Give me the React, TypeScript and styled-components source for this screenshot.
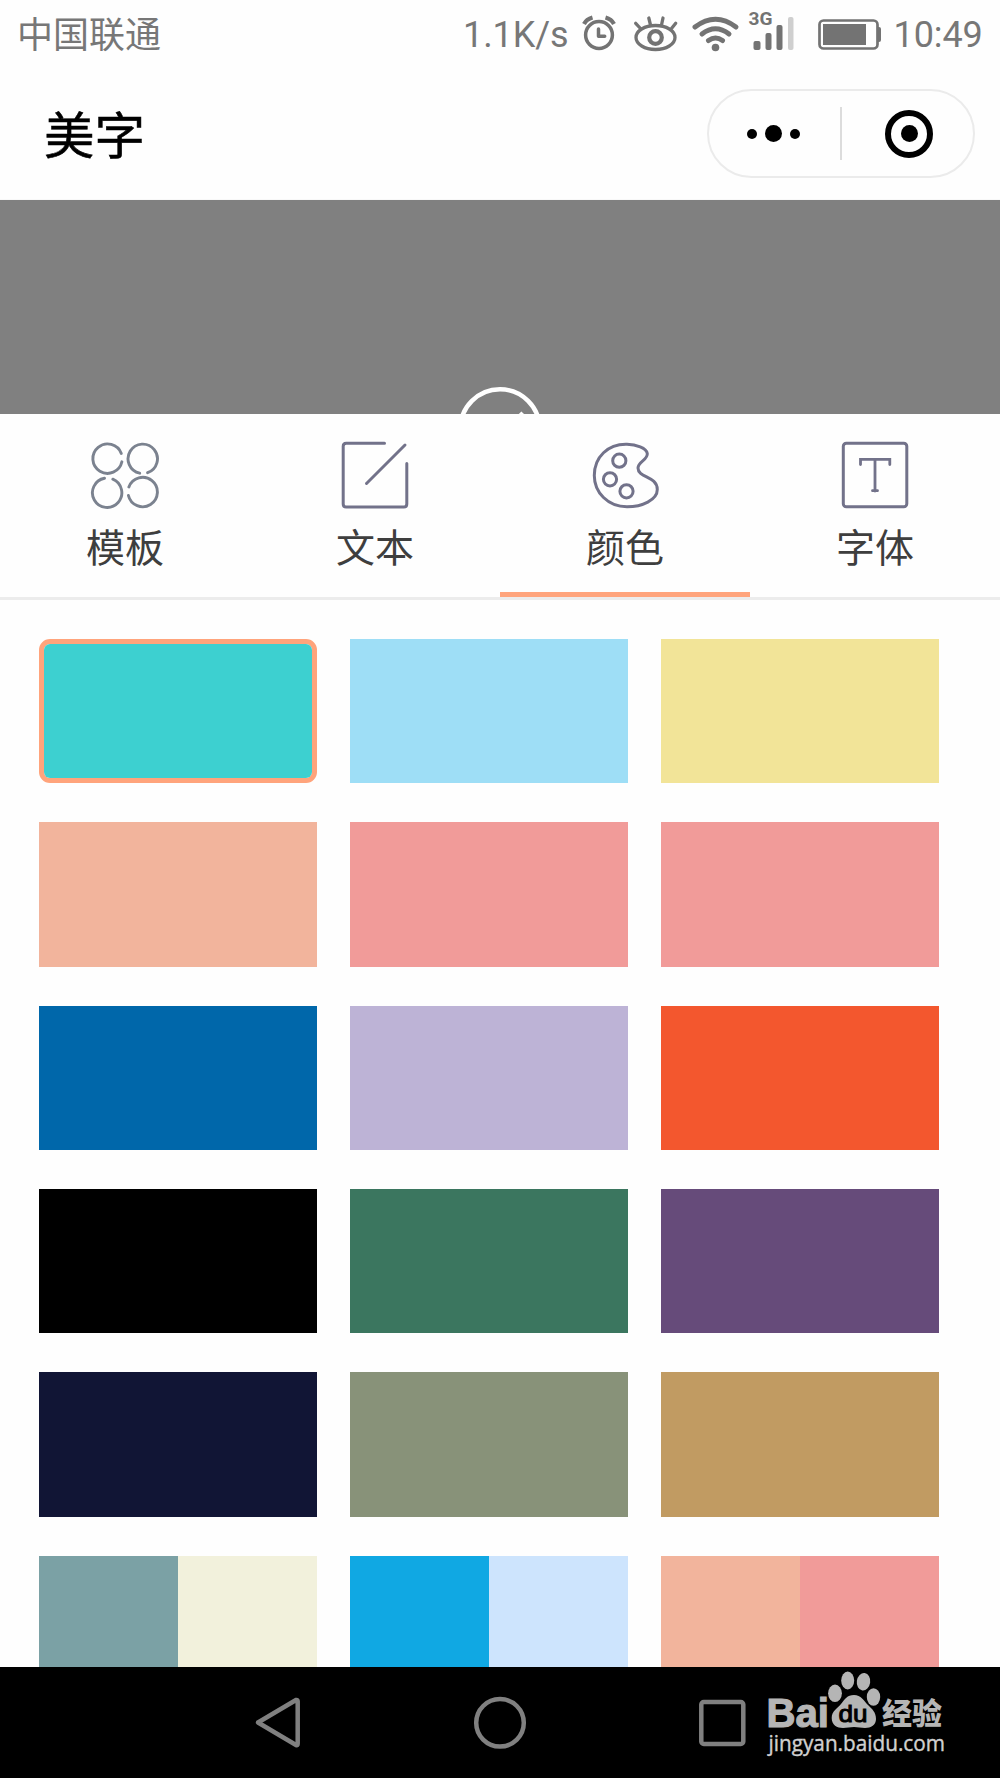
import React from "react";
import styled, { createGlobalStyle } from "styled-components";

const Global = createGlobalStyle`
  html, body { margin: 0; padding: 0; background: #fefefe; }
  * { box-sizing: border-box; }
`;

const sans = `Roboto, "Noto Sans CJK SC", sans-serif`;
const line = "#72728a";
const accent = "#ffa47c";

const Screen = styled.div`
  width: 1000px;
  height: 1778px;
  display: flex;
  flex-direction: column;
  overflow: hidden;
  background: #fefefe;
  font-family: ${sans};
`;

const StatusBar = styled.div`
  height: 70px;
  display: flex;
  align-items: flex-start;
  justify-content: space-between;
  padding: 0 17px 0 17px;
  color: #777;
  font-size: 36px;
  line-height: 70px;
`;

const Carrier = styled.span`
  font-family: "Noto Sans CJK SC", sans-serif;
  font-size: 36px;
  line-height: 64px;
`;

const StatusGroup = styled.div`
  display: flex;
`;

const StatusText = styled.span<{ $w: number; $indent?: number }>`
  width: ${(p) => p.$w}px;
  text-indent: ${(p) => p.$indent ?? 0}px;
  letter-spacing: -0.1px;
  white-space: nowrap;
`;

const Glyph = styled.svg`
  display: block;
  flex: none;
`;

const Header = styled.header`
  height: 130px;
  display: flex;
  align-items: flex-start;
  justify-content: space-between;
  padding: 19px 25px 0 44px;
  border-bottom: 1px solid #f8f8f8;
`;

const Title = styled.h1`
  margin: 8px 0 0;
  font: 400 50.5px/70px "Noto Sans CJK SC", sans-serif;
  -webkit-text-stroke: 0.5px #000;
  color: #000;
`;

const Capsule = styled.div`
  width: 268px;
  height: 89px;
  border: 2px solid #ebebeb;
  border-radius: 45px;
  display: flex;
  align-items: center;
`;

const CapsuleHalf = styled.div<{ $shift: number }>`
  flex: 1 1 0;
  min-width: 0;
  display: flex;
  align-items: center;
  justify-content: center;
  gap: 8px;
  padding-left: ${(p) => Math.max(p.$shift, 0)}px;
  padding-right: ${(p) => Math.max(-p.$shift, 0)}px;
`;

const CapsuleDivider = styled.div`
  width: 2px;
  height: 53px;
  background: #dcdcdc;
`;

const Dot = styled.span<{ $size: number }>`
  width: ${(p) => p.$size}px;
  height: ${(p) => p.$size}px;
  border-radius: 50%;
  background: #000;
`;

const Ring = styled.span`
  width: 48px;
  height: 48px;
  border: 6px solid #000;
  border-radius: 50%;
  display: flex;
  align-items: center;
  justify-content: center;
`;

const Preview = styled.section`
  height: 214px;
  background: #808080;
  display: flex;
  justify-content: center;
  align-items: flex-end;
`;

const Tabs = styled.nav`
  height: 186px;
  display: grid;
  grid-template-columns: repeat(4, 1fr);
  border-bottom: 3px solid #ececec;
`;

const Tab = styled.div<{ $active?: boolean }>`
  display: flex;
  flex-direction: column;
  align-items: center;
  padding-top: 24px;
  border-bottom: 5px solid ${(p) => (p.$active ? accent : "transparent")};
`;

const TabLabel = styled.span`
  margin-top: 5px;
  font: 400 39px/56px "Noto Sans CJK SC", sans-serif;
  color: #3e3e3e;
`;

const Palette = styled.main`
  height: 1067px;
  overflow: hidden;
  padding: 39px 0 0 39px;
  display: grid;
  grid-template-columns: repeat(3, 277.8px);
  grid-auto-rows: 144.4px;
  gap: 38.95px 33.2px;
`;

const Swatch = styled.div<{ $selected?: boolean }>`
  display: flex;
  overflow: hidden;
  border: ${(p) => (p.$selected ? `5px solid ${accent}` : "0")};
  border-radius: ${(p) => (p.$selected ? 11 : 0)}px;
  background: ${(p) => (p.$selected ? accent : "none")};
`;

const Tone = styled.span<{ $color: string }>`
  flex: 1;
  background: ${(p) => p.$color};
`;

const NavBar = styled.footer`
  position: relative;
  height: 111px;
  background: #000;
  display: flex;
  align-items: center;
  justify-content: center;
  gap: 162px;
`;

const Watermark = styled.svg`
  position: absolute;
  left: 760px;
  top: 0;
`;

const SWATCHES: string[][] = [
  ["#3dd0d0"], ["#9edef6"], ["#f2e498"],
  ["#f2b49c"], ["#f19b99"], ["#f19b99"],
  ["#0067aa"], ["#bdb3d6"], ["#f3572e"],
  ["#000000"], ["#3b765f"], ["#664b7a"],
  ["#111535"], ["#889279"], ["#c19b62"],
  ["#7ba1a5", "#f2f1dc"], ["#10a8e3", "#cde4fd"], ["#f2b49c", "#f19b99"],
];

const StatusIcons = () => (
  <Glyph width="313" height="70" viewBox="578 0 313 70" fill="none" stroke="#737373" strokeLinecap="round" strokeLinejoin="round">
    <g strokeWidth="3.5">
      <circle cx="599" cy="35" r="13.4" />
      <path d="M598.5 29v7.3h6.2" />
      <path d="M584 24q2.5-4.8 8.5-6.5M605.5 17.5q6 1.7 8.5 6.5" strokeLinecap="butt" strokeWidth="4.2" />
    </g>
    <g strokeWidth="3.3">
      <ellipse cx="655.5" cy="37.5" rx="19.5" ry="12" />
      <circle cx="655.5" cy="37.5" r="6.3" strokeWidth="4.2" />
      <path d="M640.5 28.5l-4.8-5.2M650.5 25l-1.7-7M661.5 25l1.5-7M671.5 28.5l4.2-5.2" />
    </g>
    <g strokeWidth="5">
      <path d="M695 27q20.5-15.5 41 0" />
      <path d="M702 34q13.5-10.5 27 0" />
      <path d="M708.5 40.5q7-5 14 0" />
    </g>
    <circle cx="715.5" cy="47.5" r="3.8" fill="#737373" stroke="none" />
    <text x="748.5" y="25" fontFamily="Roboto, sans-serif" fontWeight="700" fontSize="19" textLength="24" lengthAdjust="spacingAndGlyphs" fill="#737373" stroke="none">3G</text>
    <g fill="#737373" stroke="none">
      <rect x="753.5" y="41" width="7" height="9" rx="2" />
      <rect x="765.5" y="33" width="6" height="17" rx="2" />
      <rect x="776.5" y="25" width="6" height="25" rx="2" />
      <rect x="788" y="17" width="5.5" height="33" rx="2" fill="#cfcfcf" />
      <rect x="823" y="24" width="43" height="21" />
      <path d="M877.5 27h1.5q2 0 2 2v11q0 2-2 2h-1.5z" />
    </g>
    <rect x="819.5" y="20.5" width="58" height="28" rx="4" strokeWidth="2.7" />
  </Glyph>
);

const TemplateIcon = () => (
  <Glyph width="70" height="74" viewBox="90 438 70 74" fill="none" stroke="#7b828f" strokeWidth="2.9" strokeLinecap="round">
    <path d="M121.3 453.5A14.7 14.7 0 1 0 121.9 461.8" />
    <path d="M139.7 473.2A14.7 14.7 0 1 1 147.6 472.7" />
    <path d="M104.5 478.3A14.7 14.7 0 1 0 112.8 479.2" />
    <path d="M128.9 487A14.7 14.7 0 1 1 128.4 495.5" />
  </Glyph>
);

const TextIcon = () => (
  <Glyph width="70" height="74" viewBox="340 438 70 74" fill="none" stroke={line} strokeWidth="3" strokeLinecap="round">
    <path d="M384.5 443.3h-38.3q-3 0-3 3v57.6q0 3 3 3h57.6q3 0 3-3V463.5" />
    <path d="M366.5 483.5L405 445" />
  </Glyph>
);

const ColorIcon = () => (
  <Glyph width="70" height="74" viewBox="590 438 70 74" fill="none" stroke={line} strokeWidth="3">
    <path d="M627 444.3C608 443.8 594.3 457 594.3 475.5C594.3 492.5 608 506.8 627 506.8C642 506.8 657.3 500 657.3 489.5C657.3 476 638 478 638 468C638 461.500 648 460 647.3 453.5C646.5 448 636 444.5 627 444.3Z" />
    <circle cx="619.3" cy="460.7" r="6.6" />
    <circle cx="610" cy="479.3" r="6.6" />
    <circle cx="626.5" cy="491.3" r="6.6" />
  </Glyph>
);

const FontIcon = () => (
  <Glyph width="70" height="74" viewBox="840 438 70 74" fill="none" stroke={line} strokeWidth="3" strokeLinecap="round">
    <rect x="843.3" y="443.3" width="63.5" height="63.5" rx="3" />
    <path d="M860.5 464.5v-5.200h29.300v5.200M875 460v31M872.5 490.7h5" strokeWidth="2.8" />
  </Glyph>
);

const BaiduMark = () => (
  <Watermark width="200" height="111" viewBox="760 1667 200 111" fill="#b5b5b5">
    <text x="766.5" y="1726.5" fontFamily="'Liberation Sans', Arial, sans-serif" fontWeight="700" fontSize="41" textLength="62.5" lengthAdjust="spacingAndGlyphs" stroke="#b5b5b5" strokeWidth="1.2">Bai</text>
    <ellipse cx="835" cy="1693.3" rx="6.9" ry="8.7" />
    <ellipse cx="847.7" cy="1680.5" rx="6.5" ry="9" />
    <ellipse cx="863.5" cy="1681.8" rx="6.7" ry="8.8" transform="rotate(8 863.5 1681.8)" />
    <ellipse cx="873.5" cy="1697" rx="6.7" ry="8.7" />
    <path d="M854 1695C861 1695 864 1701 868 1705C872 1709 876 1712 876 1719C876 1725 871 1728 865 1728C861 1728 858 1727 854 1727C850 1727 847 1728 843 1728C837 1728 831.7 1725 831.7 1718C831.7 1711 837 1709 841 1704C845 1699 847 1695 854 1695Z" />
    <text x="838.5" y="1722" fill="#000" fontFamily="'Liberation Sans', Arial, sans-serif" fontWeight="400" fontSize="24" textLength="29" lengthAdjust="spacingAndGlyphs" stroke="#000" strokeWidth="1">du</text>
    <text x="882" y="1724" fontFamily="'Noto Sans CJK SC', sans-serif" fontWeight="900" fontSize="30" textLength="60" lengthAdjust="spacingAndGlyphs">经验</text>
    <text x="768.5" y="1750.7" fill="#d0d0d0" fontFamily="'Open Sans', sans-serif" fontSize="21.5" textLength="176.5" lengthAdjust="spacingAndGlyphs" stroke="#d0d0d0" strokeWidth="0.4">jingyan.baidu.com</text>
  </Watermark>
);

const TABS = [
  { label: "模板", Icon: TemplateIcon },
  { label: "文本", Icon: TextIcon },
  { label: "颜色", Icon: ColorIcon, active: true },
  { label: "字体", Icon: FontIcon },
];

export default function App() {
  return (
    <Screen>
      <Global />
      <StatusBar>
        <Carrier>中国联通</Carrier>
        <StatusGroup>
          <StatusText $w={115}>1.1K/s</StatusText>
          <StatusIcons />
          <StatusText $w={92} $indent={2.5}>10:49</StatusText>
        </StatusGroup>
      </StatusBar>
      <Header>
        <Title>美字</Title>
        <Capsule>
          <CapsuleHalf $shift={-3}>
            <Dot $size={10} />
            <Dot $size={17} />
            <Dot $size={10} />
          </CapsuleHalf>
          <CapsuleDivider />
          <CapsuleHalf $shift={3}>
            <Ring>
              <Dot $size={17} />
            </Ring>
          </CapsuleHalf>
        </Capsule>
      </Header>
      <Preview>
        <Glyph width="90" height="30" viewBox="455 384 90 30" fill="none" stroke="#fff" strokeWidth="4.5">
          <circle cx="500" cy="429" r="39.7" />
          <path d="M496 440L523 413" />
        </Glyph>
      </Preview>
      <Tabs>
        {TABS.map(({ label, Icon, active }) => (
          <Tab key={label} $active={active}>
            <Icon />
            <TabLabel>{label}</TabLabel>
          </Tab>
        ))}
      </Tabs>
      <Palette>
        {SWATCHES.map((tones, i) => (
          <Swatch key={i} $selected={i === 0}>
            {tones.map((tone) => (
              <Tone key={tone} $color={tone} />
            ))}
          </Swatch>
        ))}
      </Palette>
      <NavBar>
        <Glyph width="60" height="60" viewBox="248 1692.5 60 60" fill="none" stroke="#808080" strokeWidth="4.5" strokeLinejoin="round">
          <path d="M258 1722L296 1699.5Q297.7 1699 297.7 1701V1743Q297.7 1745.5 296 1744.5Z" />
        </Glyph>
        <Glyph width="60" height="60" viewBox="470 1692.5 60 60" fill="none" stroke="#808080" strokeWidth="4.5">
          <circle cx="500" cy="1722.3" r="23.8" />
        </Glyph>
        <Glyph width="60" height="60" viewBox="692 1692.5 60 60" fill="none" stroke="#808080" strokeWidth="4.5">
          <rect x="701.3" y="1701.5" width="42" height="42" rx="2.5" />
        </Glyph>
        <BaiduMark />
      </NavBar>
    </Screen>
  );
}
